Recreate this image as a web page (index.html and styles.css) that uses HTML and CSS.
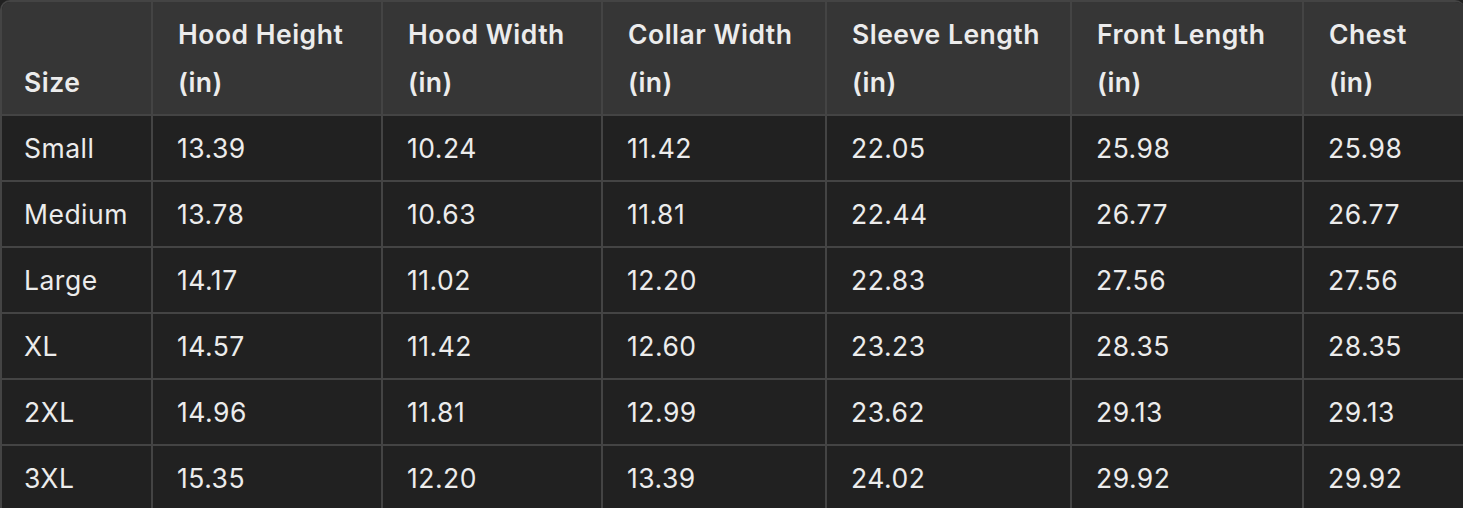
FILE: index.html
```html
<!DOCTYPE html>
<html>
<head>
<meta charset="utf-8">
<link rel="stylesheet" href="styles.css">
</head>
<body>
<table class="size-table">
  <colgroup>
    <col class="c1"><col class="c2"><col class="c3"><col class="c4"><col class="c5"><col class="c6"><col class="c7">
  </colgroup>
  <thead>
    <tr>
      <th>Size</th>
      <th>Hood Height<br>(in)</th>
      <th>Hood Width<br>(in)</th>
      <th>Collar Width<br>(in)</th>
      <th>Sleeve Length<br>(in)</th>
      <th>Front Length<br>(in)</th>
      <th>Chest<br>(in)</th>
    </tr>
  </thead>
  <tbody>
    <tr><td>Small</td><td>13.39</td><td>10.24</td><td>11.42</td><td>22.05</td><td>25.98</td><td>25.98</td></tr>
    <tr><td>Medium</td><td>13.78</td><td>10.63</td><td>11.81</td><td>22.44</td><td>26.77</td><td>26.77</td></tr>
    <tr><td>Large</td><td>14.17</td><td>11.02</td><td>12.20</td><td>22.83</td><td>27.56</td><td>27.56</td></tr>
    <tr><td>XL</td><td>14.57</td><td>11.42</td><td>12.60</td><td>23.23</td><td>28.35</td><td>28.35</td></tr>
    <tr><td>2XL</td><td>14.96</td><td>11.81</td><td>12.99</td><td>23.62</td><td>29.13</td><td>29.13</td></tr>
    <tr><td>3XL</td><td>15.35</td><td>12.20</td><td>13.39</td><td>24.02</td><td>29.92</td><td>29.92</td></tr>
  </tbody>
</table>
</body>
</html>
```
FILE: styles.css
```css
html, body {
  margin: 0;
  padding: 0;
  background: #212121;
}
.size-table {
  width: 1463px;
  table-layout: fixed;
  border-collapse: separate;
  border-spacing: 0;
  font-family: Inter, "Noto Sans", sans-serif;
  font-size: 26.5px;
  letter-spacing: 0.5px;
  color: #ececec;
  border-top: 2px solid #444444;
  border-left: 2px solid #444444;
  border-top-left-radius: 10px;
  border-top-right-radius: 10px;
  overflow: hidden;
}
.c1 { width: 151px; }
.c2 { width: 230px; }
.c3 { width: 220px; }
.c4 { width: 224px; }
.c5 { width: 245px; }
.c6 { width: 232px; }
.c7 { width: 161px; }
.size-table th,
.size-table td {
  text-align: left;
  line-height: 48px;
  padding: 8px 24px 8px 24px;
  border-right: 2px solid #444444;
  border-bottom: 2px solid #444444;
}
.size-table th {
  background: #363636;
  font-weight: 600;
  vertical-align: bottom;
  padding-left: 25px;
}
.size-table th:first-child,
.size-table td:first-child {
  padding-left: 22px;
}
.size-table td {
  background: #212121;
  font-weight: 400;
}
```
